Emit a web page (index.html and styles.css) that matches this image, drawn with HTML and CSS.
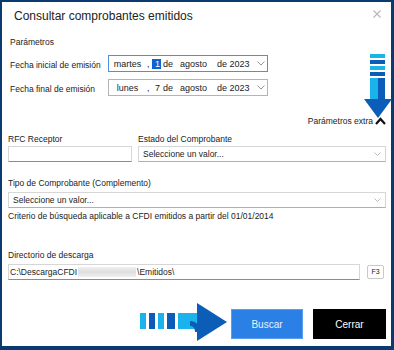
FILE: index.html
```html
<!DOCTYPE html>
<html lang="es">
<head>
    <meta charset="UTF-8">
    <meta name="viewport" content="width=device-width, initial-scale=1.0">
    <title>Consultar comprobantes emitidos</title>
    <link rel="stylesheet" href="styles.css">
</head>
<body>
    <div class="dialog">
        <div class="title-bar">
            <div class="title">Consultar comprobantes emitidos</div>
            <svg class="close" width="8" height="8" viewBox="0 0 8 8"><path d="M0.5 0.5L7.5 7.5M7.5 0.5L0.5 7.5" stroke="#b8b8b8" stroke-width="1.2"/></svg>
        </div>

        <div class="section-label">Parámetros</div>

        <div class="date-row">
            <label class="date-label">Fecha inicial de emisión</label>
            <div class="date-box focused">
                <span class="seg-wday">martes</span>
                <span class="seg-sep">,</span>
                <span class="seg-day sel">1</span>
                <span class="seg-de">de</span>
                <span class="seg-month">agosto</span>
                <span class="seg-year">de 2023</span>
                <svg class="chev" width="8" height="5" viewBox="0 0 8 5"><path d="M0.5 0.5L4 4L7.5 0.5" fill="none" stroke="#888" stroke-width="0.9"/></svg>
            </div>
        </div>
        <div class="date-row second">
            <label class="date-label">Fecha final de emisión</label>
            <div class="date-box">
                <span class="seg-wday">lunes</span>
                <span class="seg-sep">,</span>
                <span class="seg-day">7</span>
                <span class="seg-de">de</span>
                <span class="seg-month">agosto</span>
                <span class="seg-year">de 2023</span>
                <svg class="chev" width="8" height="5" viewBox="0 0 8 5"><path d="M0.5 0.5L4 4L7.5 0.5" fill="none" stroke="#888" stroke-width="0.9"/></svg>
            </div>
        </div>

        <div class="extra-toggle">
            <span>Parámetros extra</span>
            <svg width="11" height="8" viewBox="0 0 11 8"><path d="M1 7L5.5 2L10 7" fill="none" stroke="#111" stroke-width="2.2"/></svg>
        </div>

        <div class="field-grid">
            <div class="field">
                <div class="field-label">RFC Receptor</div>
                <div class="text-input"></div>
            </div>
            <div class="field">
                <div class="field-label">Estado del Comprobante</div>
                <div class="select-box">
                    <span>Seleccione un valor...</span>
                    <svg class="chev" width="7" height="4" viewBox="0 0 7 4"><path d="M0.5 0.5L3.5 3.5L6.5 0.5" fill="none" stroke="#aaa" stroke-width="0.8"/></svg>
                </div>
            </div>
        </div>

        <div class="field tipo">
            <div class="field-label">Tipo de Comprobante (Complemento)</div>
            <div class="select-box">
                <span>Seleccione un valor...</span>
                <svg class="chev" width="7" height="4" viewBox="0 0 7 4"><path d="M0.5 0.5L3.5 3.5L6.5 0.5" fill="none" stroke="#aaa" stroke-width="0.8"/></svg>
            </div>
            <div class="hint">Criterio de búsqueda aplicable a CFDI emitidos a partir del 01/01/2014</div>
        </div>

        <div class="field dir">
            <div class="field-label">Directorio de descarga</div>
            <div class="dir-row">
                <div class="text-input path">C:\DescargaCFDI<span class="blur"></span>\Emitidos\</div>
                <div class="key-btn">F3</div>
            </div>
        </div>

        <div class="actions">
            <button class="btn btn-primary">Buscar</button>
            <button class="btn btn-dark">Cerrar</button>
        </div>

        <!-- callout arrows drawn over the dialog -->
        <svg class="arrow-down" width="30" height="70" viewBox="0 0 30 70">
            <rect x="8" y="2" width="15" height="4" fill="#1bb3ec"/>
            <rect x="8" y="8" width="15" height="4" fill="#0b5db8"/>
            <rect x="8" y="14" width="15" height="4" fill="#1bb3ec"/>
            <rect x="8" y="20" width="15" height="4" fill="#0b5db8"/>
            <path d="M8 26H23V47H8Z" fill="#1bb3ec"/>
            <path d="M16 26H23V47H16Z" fill="#0b5db8"/>
            <path d="M2 47H30L16 66Z" fill="#0b5db8"/>
        </svg>
        <svg class="arrow-right" width="90" height="40" viewBox="0 0 90 40">
            <rect x="0" y="11" width="6" height="16" fill="#1bb3ec"/>
            <rect x="9" y="11" width="6" height="16" fill="#0b5db8"/>
            <rect x="18" y="11" width="6" height="16" fill="#1bb3ec"/>
            <rect x="27" y="11" width="8" height="16" fill="#0b5db8"/>
            <path d="M38 11H58V27H38Z" fill="#1bb3ec"/>
            <path d="M50 19C56 19 60 23 60 30H55C55 26 53 24 50 24Z" fill="#0b5db8"/>
            <path d="M57 1L87 20L57 39Z" fill="#0b5db8"/>
        </svg>
    </div>
</body>
</html>
```

FILE: styles.css
```css
body {
    margin: 0;
    font-family: "Liberation Sans", Arial, sans-serif;
    color: #222;
}
.dialog {
    position: relative;
    width: 394px;
    height: 350px;
    box-sizing: border-box;
    border-style: solid;
    border-color: #0b3a70;
    border-width: 2px 3px 4px 2px;
    background-color: white;
    padding: 0 5px 0 6px;
}
.title-bar {
    display: flex;
    justify-content: space-between;
    align-items: flex-start;
    padding-top: 7px;
}
.title {
    margin-left: 6px;
    font-size: 12px;
    line-height: 14px;
    color: #222;
}
.close {
    margin-top: 1px;
    margin-right: 5px;
}
.section-label {
    margin: 14px 0 0 2px;
    font-size: 8.5px;
    line-height: 11px;
}
.date-row {
    display: flex;
    align-items: center;
    margin-top: 7px;
    padding-left: 2px;
    font-size: 8.5px;
}
.date-label {
    width: 98px;
    padding-top: 2px;
}
.date-row.second .date-label {
    padding-top: 3px;
}
.date-box {
    display: flex;
    align-items: center;
    width: 160px;
    height: 17px;
    box-sizing: border-box;
    border: 1px solid #b4b4b4;
    font-size: 9px;
    line-height: 10px;
}
.date-box.focused {
    border-color: #4f8fdc;
}
.seg-wday {
    width: 37px;
    text-align: center;
}
.seg-sep {
    width: 5px;
    padding-left: 1px;
}
.seg-day {
    width: 9px;
    box-sizing: border-box;
    padding-right: 1px;
    text-align: right;
}
.seg-day.sel {
    background-color: #0a64d2;
    color: white;
}
.seg-de {
    margin-left: 2px;
}
.seg-month {
    width: 41px;
    text-align: center;
}
.seg-year {
    margin-left: 3px;
}
.date-box .chev {
    margin-left: auto;
    margin-right: 2px;
}
.extra-toggle {
    display: flex;
    justify-content: flex-end;
    align-items: center;
    gap: 2px;
    margin-top: 19px;
    font-size: 8.5px;
    line-height: 12px;
}
.field-grid {
    display: grid;
    grid-template-columns: 124px 1fr;
    gap: 6px;
    margin-top: 7px;
}
.field-label {
    font-size: 8.5px;
    line-height: 11px;
    margin-bottom: 1px;
}
.text-input {
    height: 16px;
    box-sizing: border-box;
    border: 1px solid #d6d6d6;
    border-bottom-color: #8c8c8c;
}
.select-box {
    display: flex;
    align-items: center;
    justify-content: space-between;
    height: 16px;
    box-sizing: border-box;
    border: 1px solid #d6d6d6;
    border-bottom-color: #b0b0b0;
    padding: 0 4px 0 4px;
    font-size: 8.5px;
}
.tipo {
    margin-top: 16px;
}
.tipo .field-label {
    margin-bottom: 3px;
}
.hint {
    margin-top: 3px;
    font-size: 8.5px;
    line-height: 11px;
}
.dir {
    margin-top: 28px;
}
.dir .field-label {
    margin-bottom: 3px;
}
.dir-row {
    display: flex;
    align-items: center;
    gap: 7px;
}
.path {
    flex: 1;
    display: flex;
    align-items: center;
    padding-left: 1px;
    font-size: 8.5px;
}
.blur {
    width: 58px;
    height: 10px;
    margin: 0 1px;
    background: linear-gradient(#f0f0f0, #dedede 50%, #f0f0f0);
}
.key-btn {
    width: 17px;
    height: 14px;
    box-sizing: border-box;
    border: 1px solid #c8c8c8;
    border-radius: 2px;
    margin-right: 2px;
    font-size: 7px;
    line-height: 12px;
    text-align: center;
}
.actions {
    display: flex;
    justify-content: flex-end;
    gap: 10px;
    margin-top: 29px;
}
.btn {
    width: 73px;
    height: 30px;
    border: none;
    font-family: "Liberation Sans", Arial, sans-serif;
    font-size: 10px;
    padding: 0;
}
.btn-primary {
    width: 72px;
    background-color: #2a80e4;
    border: 1px solid #5a9ef0;
    color: #e8f2ff;
}
.btn-dark {
    background-color: black;
    color: white;
}
.arrow-down {
    position: absolute;
    left: 360px;
    top: 50px;
}
.arrow-right {
    position: absolute;
    left: 138px;
    top: 300px;
}
```
